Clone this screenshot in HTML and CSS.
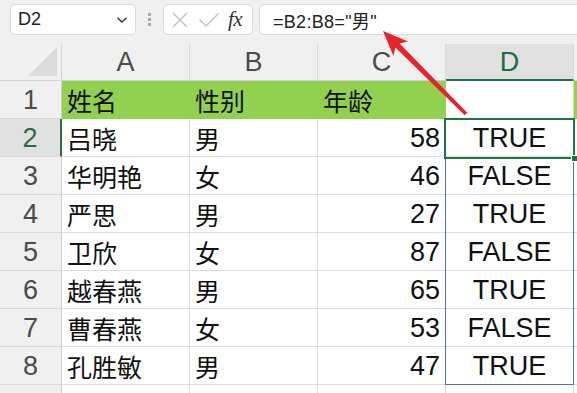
FILE: index.html
```html
<!DOCTYPE html>
<html lang="zh">
<head>
<meta charset="utf-8">
<link rel="stylesheet" href="styles.css">
</head>
<body>
<div class="app">
  <div class="toolbar">
    <div class="namebox">
      <span class="ref">D2</span>
      <svg class="chev" width="12" height="8" viewBox="0 0 12 8"><path d="M1.5 1.8 L6 6 L10.5 1.8" fill="none" stroke="#333" stroke-width="1.3"/></svg>
    </div>
    <div class="grip"><i></i><i></i><i></i></div>
    <div class="fxbox">
      <svg width="18" height="18" viewBox="0 0 18 18"><path d="M2 2 L16 16 M16 2 L2 16" stroke="#c4c4c4" stroke-width="1.5" fill="none"/></svg>
      <svg width="22" height="16" viewBox="0 0 22 16"><path d="M1.5 7.5 L8 14 L20.5 1.5" stroke="#c4c4c4" stroke-width="1.5" fill="none"/></svg>
      <span class="fx">fx</span>
    </div>
    <div class="formula">=B2:B8="男"</div>
  </div>

  <div class="sheet">
    <div class="corner"><svg width="30" height="30" viewBox="0 0 30 30"><polygon points="0,29 29,29 29,0" fill="#dadada"/></svg></div>
    <div class="ch">A</div><div class="ch">B</div><div class="ch">C</div><div class="ch active">D</div><div class="ch end"></div>

    <div class="rh">1</div>
    <div class="c g">姓名</div><div class="c g">性别</div><div class="c g">年龄</div><div class="c w"></div><div class="c g end"></div>

    <div class="rh active">2</div>
    <div class="c">吕晓</div><div class="c">男</div><div class="c n">58</div><div class="c b">TRUE</div><div class="c end"></div>

    <div class="rh">3</div>
    <div class="c">华明艳</div><div class="c">女</div><div class="c n">46</div><div class="c b">FALSE</div><div class="c end"></div>

    <div class="rh">4</div>
    <div class="c">严思</div><div class="c">男</div><div class="c n">27</div><div class="c b">TRUE</div><div class="c end"></div>

    <div class="rh">5</div>
    <div class="c">卫欣</div><div class="c">女</div><div class="c n">87</div><div class="c b">FALSE</div><div class="c end"></div>

    <div class="rh">6</div>
    <div class="c">越春燕</div><div class="c">男</div><div class="c n">65</div><div class="c b">TRUE</div><div class="c end"></div>

    <div class="rh">7</div>
    <div class="c">曹春燕</div><div class="c">女</div><div class="c n">53</div><div class="c b">FALSE</div><div class="c end"></div>

    <div class="rh">8</div>
    <div class="c">孔胜敏</div><div class="c">男</div><div class="c n">47</div><div class="c b">TRUE</div><div class="c end"></div>

    <div class="rh"></div>
    <div class="c"></div><div class="c"></div><div class="c"></div><div class="c"></div><div class="c end"></div>

    <div class="spill"></div>
    <div class="sel"><span class="handle"></span></div>
  </div>

  <svg class="arrow" width="577" height="393" viewBox="0 0 577 393">
    <polygon points="383,31 408,41.5 399.6,43.4 467.3,112.7 464.7,115.3 395.4,47.6 393.5,56" fill="#e8232b"/>
  </svg>
</div>
</body>
</html>
```

FILE: styles.css
```css
* { box-sizing: border-box; }
html, body { margin: 0; padding: 0; }
body {
  width: 577px;
  height: 393px;
  overflow: hidden;
  background: #f0f0f0;
  font-family: "Liberation Sans", "Noto Sans CJK SC", sans-serif;
}
.app { position: relative; width: 577px; height: 393px; overflow: hidden; }

.toolbar {
  display: flex;
  align-items: flex-start;
  height: 44px;
  padding: 4px 0 0 10px;
}
.namebox, .fxbox, .formula {
  height: 31px;
  background: #fff;
  border: 1px solid #d9d9d9;
  border-radius: 5px;
  display: flex;
  align-items: center;
}
.namebox {
  width: 126px;
  padding: 0 7px 0 7px;
  justify-content: space-between;
}
.ref { font-size: 18px; color: #222; }
.chev { margin-top: 1px; }
.grip {
  width: 27px;
  height: 31px;
  display: flex;
  flex-direction: column;
  align-items: center;
  justify-content: center;
  gap: 2px;
}
.grip i { display: block; width: 3px; height: 3px; background: #a6a6a6; }
.fxbox {
  width: 90px;
  padding: 0 0 0 7px;
  gap: 9px;
}
.fx {
  font-family: "Liberation Serif", serif;
  font-style: italic;
  font-size: 21px;
  color: #333;
  margin-left: -1px;
  letter-spacing: -0.5px;
}
.formula {
  flex: 1;
  margin-left: 6px;
  margin-right: -10px;
  padding-left: 13px;
  font-size: 18px;
  letter-spacing: 0.3px;
  color: #222;
  font-family: "Liberation Sans", "Noto Sans CJK SC", sans-serif;
}

.sheet {
  position: relative;
  display: grid;
  grid-template-columns: 62px 128px 128px 128px 128px 1fr;
  grid-template-rows: 37px repeat(9, 38px);
}
.corner {
  border-right: 1px solid #d4d4d4;
  border-bottom: 1px solid #d4d4d4;
  display: flex;
  align-items: flex-end;
  justify-content: flex-end;
  padding: 0 3px 3px 0;
}
.corner svg { display: block; }
.ch {
  border-right: 1px solid #d8d8d8;
  border-bottom: 1px solid #cfcfcf;
  display: flex;
  align-items: center;
  justify-content: center;
  padding-top: 1px;
  font-family: "Liberation Sans", sans-serif;
  font-size: 27px;
  color: #4a4a4a;
}
.ch.active {
  background: #e1e1e1;
  color: #1e6e42;
  border-bottom: 2px solid #217346;
}
.ch.end { border-right: none; }
.rh {
  border-right: 1px solid #cfcfcf;
  border-bottom: 1px solid #d8d8d8;
  display: flex;
  align-items: center;
  justify-content: center;
  padding-top: 2px;
  font-size: 27px;
  color: #4a4a4a;
}
.rh.active {
  background: #e1e1e1;
  color: #1e6e42;
  border-right: 2px solid #217346;
}
.c {
  background: #fff;
  border-right: 1px solid #dcdcdc;
  border-bottom: 1px solid #dcdcdc;
  display: flex;
  align-items: center;
  padding: 0 5px;
  font-family: "Noto Sans CJK SC", sans-serif;
  font-size: 25px;
  color: #111;
  white-space: nowrap;
}
.c.g { background: #92d050; border-color: #92d050; }
.c.w { background: #fff; }
.c.n {
  justify-content: flex-end;
  padding-top: 2px;
  font-family: "Liberation Sans", sans-serif;
  font-size: 27px;
}
.c.b {
  justify-content: center;
  padding-top: 2px;
  font-family: "Liberation Sans", sans-serif;
  font-size: 27px;
}
.c.end { border-right: none; }

.spill {
  position: absolute;
  left: 445px;
  top: 75px;
  width: 129px;
  height: 266px;
  border: 1px solid #4a6fc0;
}
.sel {
  position: absolute;
  left: 444px;
  top: 74px;
  width: 131px;
  height: 41px;
  border: 2px solid #217346;
}
.handle {
  position: absolute;
  right: -5px;
  bottom: -5px;
  width: 7px;
  height: 7px;
  background: #217346;
  border: 1px solid #fff;
}
.arrow {
  position: absolute;
  left: 0;
  top: 0;
  pointer-events: none;
}
```
